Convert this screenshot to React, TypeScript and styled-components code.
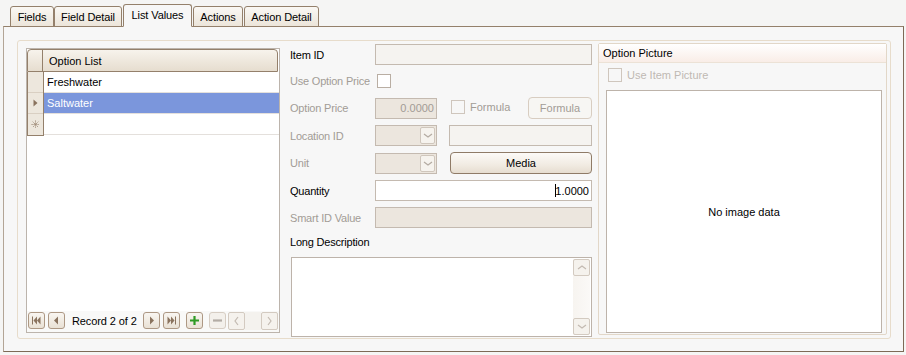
import React from "react";
import styled, { createGlobalStyle } from "styled-components";

const GlobalStyle = createGlobalStyle`
  html, body {
    margin: 0;
    padding: 0;
    background: #f5f5f4;
  }
  body {
    font-family: "Liberation Sans", Arial, sans-serif;
    font-size: 11px;
    color: #000;
  }
  * {
    box-sizing: border-box;
  }
`;

const BROWN = "#94806b";
const DIS_TEXT = "#a29c96";

interface TabDef {
  label: string;
  width: number;
  gap: number;
  active?: boolean;
}

const tabs: TabDef[] = [
  { label: "Fields", width: 44, gap: 0 },
  { label: "Field Detail", width: 68, gap: 0 },
  { label: "List Values", width: 69, gap: 0, active: true },
  { label: "Actions", width: 50, gap: 0 },
  { label: "Action Detail", width: 75, gap: 1 },
];

const ArrowIcon = ({ kind }: { kind: "first" | "prev" | "next" | "last" }) => {
  const c = "#8a735e";
  return (
    <svg width="11" height="9" viewBox="0 0 11 9">
      {kind === "first" && (
        <>
          <rect x="1" y="0.5" width="1" height="8" fill={c} />
          <path d="M6 0.5 L2.5 4.5 L6 8.5 Z" fill={c} />
          <path d="M9.5 0.5 L6 4.5 L9.5 8.5 Z" fill={c} />
        </>
      )}
      {kind === "prev" && <path d="M7 0.5 L3 4.5 L7 8.5 Z" fill={c} />}
      {kind === "next" && <path d="M4 0.5 L8 4.5 L4 8.5 Z" fill={c} />}
      {kind === "last" && (
        <>
          <path d="M1.5 0.5 L5 4.5 L1.5 8.5 Z" fill={c} />
          <path d="M5 0.5 L8.5 4.5 L5 8.5 Z" fill={c} />
          <rect x="9" y="0.5" width="1" height="8" fill={c} />
        </>
      )}
    </svg>
  );
};

const Chevron = ({ dir, color = "#c3bab1" }: { dir: "left" | "right" | "up" | "down"; color?: string }) => {
  const d = {
    left: "M6 1 L3 5 L6 9",
    right: "M3 1 L6 5 L3 9",
    up: "M1 6 L5 3 L9 6",
    down: "M1 3 L5 6 L9 3",
  }[dir];
  const horiz = dir === "left" || dir === "right";
  return (
    <svg width={horiz ? 9 : 10} height={horiz ? 10 : 9} viewBox={horiz ? "0 0 9 10" : "0 0 10 9"}>
      <path d={d} fill="none" stroke={color} strokeWidth="1.2" />
    </svg>
  );
};

const App = () => {
  return (
    <>
      <GlobalStyle />
      <Page>
        <TabStrip>
          {tabs.map((t) => (
            <Tab key={t.label} $width={t.width} $gap={t.gap} $active={!!t.active}>
              {t.label}
            </Tab>
          ))}
        </TabStrip>
        <TabPanel>
          <Frame>
            <OptionGrid>
              <GridHeader>
                <HeaderIndicator />
                <HeaderCell>Option List</HeaderCell>
              </GridHeader>
              <RowsBlock>
                <IndicatorColumn>
                  <IndicatorCell />
                  <IndicatorCell>
                    <svg width="5" height="8" viewBox="0 0 5 8">
                      <path d="M0.5 0.5 L4.5 4 L0.5 7.5 Z" fill="#8a735e" />
                    </svg>
                  </IndicatorCell>
                  <IndicatorCell $last>
                    <svg width="9" height="9" viewBox="0 0 9 9">
                      <path
                        d="M4.5 0.5 V8.5 M0.5 4.5 H8.5 M1.7 1.7 L7.3 7.3 M7.3 1.7 L1.7 7.3"
                        stroke="#9a8570"
                        strokeWidth="0.9"
                        strokeDasharray="1.2 0.8"
                      />
                    </svg>
                  </IndicatorCell>
                </IndicatorColumn>
                <DataColumn>
                  <DataCell>Freshwater</DataCell>
                  <DataCell $selected>Saltwater</DataCell>
                  <DataCell />
                </DataColumn>
              </RowsBlock>
              <GridFill />
              <Navigator>
                <NavButton>
                  <ArrowIcon kind="first" />
                </NavButton>
                <NavButton>
                  <ArrowIcon kind="prev" />
                </NavButton>
                <RecordText>Record 2 of 2</RecordText>
                <NavButton>
                  <ArrowIcon kind="next" />
                </NavButton>
                <NavButton>
                  <ArrowIcon kind="last" />
                </NavButton>
                <NavButton $ml={3}>
                  <svg width="11" height="11" viewBox="0 0 11 11">
                    <path d="M5.5 1 V10 M1 5.5 H10" stroke="#2f9a24" strokeWidth="2.2" />
                  </svg>
                </NavButton>
                <NavButton $disabled $ml={3}>
                  <svg width="11" height="11" viewBox="0 0 11 11">
                    <path d="M1 5.5 H10" stroke="#b3aca5" strokeWidth="2.2" />
                  </svg>
                </NavButton>
                <HScroll>
                  <ScrollBtn>
                    <Chevron dir="left" />
                  </ScrollBtn>
                  <ScrollTrack />
                  <ScrollBtn>
                    <Chevron dir="right" />
                  </ScrollBtn>
                </HScroll>
              </Navigator>
            </OptionGrid>

            <Form>
              <FieldRow $h={21}>
                <Label>Item ID</Label>
                <TextBox $w={217} $kind="readonly" />
              </FieldRow>
              <FieldRow $h={20}>
                <Label $disabled>Use Option Price</Label>
                <CheckBox $enabled $ml={2} />
              </FieldRow>
              <FieldRow $h={22}>
                <Label $disabled>Option Price</Label>
                <TextBox $w={62} $kind="disabled" $align="right">
                  0.0000
                </TextBox>
                <CheckLabel>
                  <CheckBox />
                  <span>Formula</span>
                </CheckLabel>
                <PushButton $disabled $w={64}>
                  Formula
                </PushButton>
              </FieldRow>
              <FieldRow $h={21}>
                <Label $disabled>Location ID</Label>
                <Combo>
                  <ComboBtn>
                    <Chevron dir="down" color="#b4aba2" />
                  </ComboBtn>
                </Combo>
                <TextBox $w={143} $kind="readonly" $ml={12} />
              </FieldRow>
              <FieldRow $h={22}>
                <Label $disabled>Unit</Label>
                <Combo>
                  <ComboBtn>
                    <Chevron dir="down" color="#b4aba2" />
                  </ComboBtn>
                </Combo>
                <PushButton $w={142} $ml={13}>
                  Media
                </PushButton>
              </FieldRow>
              <FieldRow $h={21}>
                <Label>Quantity</Label>
                <TextBox $w={217} $kind="normal" $align="right">
                  <Caret />1.0000
                </TextBox>
              </FieldRow>
              <FieldRow $h={21}>
                <Label $disabled>Smart ID Value</Label>
                <TextBox $w={217} $kind="disabled" />
              </FieldRow>
              <SectionLabel>Long Description</SectionLabel>
              <Memo>
                <VScroll>
                  <ScrollBtn $v>
                    <Chevron dir="up" />
                  </ScrollBtn>
                  <ScrollBtn $v>
                    <Chevron dir="down" />
                  </ScrollBtn>
                </VScroll>
              </Memo>
            </Form>

            <PicGroup>
              <PicHeader>Option Picture</PicHeader>
              <PicCheckRow>
                <CheckBox />
                <span>Use Item Picture</span>
              </PicCheckRow>
              <ImageBox>No image data</ImageBox>
            </PicGroup>
          </Frame>
        </TabPanel>
      </Page>
    </>
  );
};

export default App;

const Page = styled.div`
  width: 906px;
  height: 355px;
  padding-top: 4px;
`;

const TabStrip = styled.div`
  display: flex;
  align-items: flex-end;
  height: 23px;
  padding-left: 10px;
  margin-bottom: -1px;
  position: relative;
  z-index: 1;
`;

const Tab = styled.div<{ $width: number; $gap: number; $active: boolean }>`
  width: ${({ $width }) => $width}px;
  height: ${({ $active }) => ($active ? 23 : 21)}px;
  margin-left: ${({ $gap, $active }) => ($active ? 1 : $gap)}px;
  margin-right: ${({ $active }) => ($active ? 1 : 0)}px;
  border: 1px solid ${BROWN};
  border-bottom-color: ${({ $active }) => ($active ? "#f7f7f7" : BROWN)};
  border-radius: 3px 3px 0 0;
  background: ${({ $active }) =>
    $active ? "#f7f7f7" : "linear-gradient(#faf8f4, #ece5da)"};
  display: flex;
  align-items: center;
  justify-content: center;
  padding-bottom: ${({ $active }) => ($active ? 2 : 0)}px;
  letter-spacing: -0.1px;
  white-space: nowrap;
`;

const TabPanel = styled.div`
  margin-left: 3px;
  width: 901px;
  height: 326px;
  border: 1px solid ${BROWN};
  border-left-color: #b3a596;
  border-right-color: #7d6a56;
  border-bottom-color: #7d6a56;
  background: #f7f7f7;
  padding: 13px 12px 12px 13px;
`;

const Frame = styled.div`
  height: 100%;
  border: 1px solid #e7dccb;
  border-radius: 3px;
  display: flex;
  align-items: flex-start;
  padding: 0 3px 0 8px;
`;

const OptionGrid = styled.div`
  width: 254px;
  height: 285px;
  margin-top: 7px;
  border: 1px solid #bcb4ac;
  background: #fff;
  display: flex;
  flex-direction: column;
`;

const GridHeader = styled.div`
  display: flex;
  height: 23px;
  margin-right: 1px;
  border: 1px solid ${BROWN};
  border-radius: 4px 4px 0 0;
  background: linear-gradient(#f7f3ec, #e6ddcf);
  overflow: hidden;
`;

const HeaderIndicator = styled.div`
  width: 15px;
  border-right: 1px solid ${BROWN};
`;

const HeaderCell = styled.div`
  flex: 1;
  display: flex;
  align-items: center;
  padding-left: 6px;
`;

const RowsBlock = styled.div`
  display: flex;
`;

const IndicatorColumn = styled.div`
  width: 17px;
  border: 1px solid ${BROWN};
  border-top: none;
  background: #ede7dd;
`;

const IndicatorCell = styled.div<{ $last?: boolean }>`
  height: 21px;
  border-bottom: ${({ $last }) => ($last ? "none" : "1px solid #d9cfc2")};
  display: flex;
  align-items: center;
  justify-content: center;
`;

const DataColumn = styled.div`
  flex: 1;
`;

const DataCell = styled.div<{ $selected?: boolean }>`
  height: 21px;
  border-bottom: 1px solid #e4e0dc;
  display: flex;
  align-items: center;
  padding-left: 3px;
  background: ${({ $selected }) => ($selected ? "#7b96dc" : "#fff")};
  color: ${({ $selected }) => ($selected ? "#fff" : "#000")};
`;

const GridFill = styled.div`
  flex: 1;
`;

const Navigator = styled.div`
  height: 21px;
  display: flex;
  align-items: center;
  padding: 0 1px 2px 1px;
  gap: 3px;
  background: #f9f9f8;
`;

const NavButton = styled.div<{ $disabled?: boolean; $ml?: number }>`
  width: 17px;
  height: 17px;
  margin-left: ${({ $ml }) => $ml ?? 0}px;
  border: 1px solid ${({ $disabled }) => ($disabled ? "#d6cdc3" : "#ad9884")};
  border-radius: 3px;
  background: ${({ $disabled }) =>
    $disabled ? "#f3f0eb" : "linear-gradient(#f9f6f1, #e9e1d5)"};
  display: flex;
  align-items: center;
  justify-content: center;
`;

const RecordText = styled.span`
  margin: 0 3px 0 4px;
  letter-spacing: -0.1px;
  white-space: nowrap;
`;

const HScroll = styled.div`
  display: flex;
  flex: 1;
  height: 18px;
  margin-left: -1px;
`;

const ScrollBtn = styled.div<{ $v?: boolean }>`
  width: 17px;
  height: ${({ $v }) => ($v ? 17 : 18)}px;
  border: 1px solid #d3cac0;
  border-radius: 2px;
  background: #f5f2ed;
  display: flex;
  align-items: center;
  justify-content: center;
`;

const ScrollTrack = styled.div`
  flex: 1;
  background: #f4f2ee;
`;

const Form = styled.div`
  width: 302px;
  margin-left: 10px;
  margin-top: 3px;
  display: flex;
  flex-direction: column;
  gap: 6px;
`;

const FieldRow = styled.div<{ $h: number }>`
  height: ${({ $h }) => $h}px;
  display: flex;
  align-items: center;
`;

const Label = styled.span<{ $disabled?: boolean }>`
  width: 85px;
  flex-shrink: 0;
  color: ${({ $disabled }) => ($disabled ? DIS_TEXT : "#000")};
  letter-spacing: -0.2px;
  white-space: nowrap;
`;

const textBoxBg = {
  readonly: "#f5f3f0",
  disabled: "#ece6de",
  normal: "#fff",
};

const TextBox = styled.div<{
  $w: number;
  $kind: "readonly" | "disabled" | "normal";
  $align?: "right";
  $ml?: number;
}>`
  width: ${({ $w }) => $w}px;
  height: 21px;
  margin-left: ${({ $ml }) => $ml ?? 0}px;
  border: 1px solid #c4bab0;
  background: ${({ $kind }) => textBoxBg[$kind]};
  color: ${({ $kind }) => ($kind === "disabled" ? DIS_TEXT : "#000")};
  display: flex;
  align-items: center;
  justify-content: ${({ $align }) => ($align === "right" ? "flex-end" : "flex-start")};
  padding: 0 2px;
`;

const Caret = styled.span`
  width: 1px;
  height: 13px;
  background: #000;
  margin-right: -1px;
`;

const CheckBox = styled.div<{ $enabled?: boolean; $ml?: number }>`
  width: 14px;
  height: 14px;
  margin-left: ${({ $ml }) => $ml ?? 0}px;
  border: 1px solid ${({ $enabled }) => ($enabled ? "#b9aea3" : "#cfc6bd")};
  background: ${({ $enabled }) => ($enabled ? "#fff" : "#f7f7f7")};
  flex-shrink: 0;
`;

const CheckLabel = styled.div`
  display: flex;
  align-items: center;
  gap: 5px;
  margin-left: 14px;
  width: 77px;
  color: ${DIS_TEXT};
  padding-bottom: 3px;
`;

const PushButton = styled.div<{ $disabled?: boolean; $w: number; $ml?: number }>`
  width: ${({ $w }) => $w}px;
  height: 22px;
  margin-left: ${({ $ml }) => $ml ?? 0}px;
  border: 1px solid ${({ $disabled }) => ($disabled ? "#d8cdc1" : "#8f7b67")};
  border-radius: 4px;
  background: ${({ $disabled }) =>
    $disabled ? "#f7f6f3" : "linear-gradient(#fcfaf7, #f1ebe2 60%, #e6ddd0)"};
  color: ${({ $disabled }) => ($disabled ? DIS_TEXT : "#000")};
  display: flex;
  align-items: center;
  justify-content: center;
`;

const Combo = styled.div`
  width: 62px;
  height: 21px;
  border: 1px solid #c4bab0;
  background: #ece6de;
  display: flex;
  justify-content: flex-end;
  align-items: center;
  padding-right: 1px;
`;

const ComboBtn = styled.div`
  width: 15px;
  height: 17px;
  border: 1px solid #cfc6bc;
  border-radius: 2px;
  background: #f6f3ee;
  display: flex;
  align-items: center;
  justify-content: center;
`;

const SectionLabel = styled.div`
  height: 14px;
  margin-top: 1px;
  display: flex;
  align-items: center;
  letter-spacing: -0.2px;
`;

const Memo = styled.div`
  width: 301px;
  height: 80px;
  margin-top: 2px;
  margin-left: 1px;
  border: 1px solid #bdb3aa;
  background: #fff;
  display: flex;
  justify-content: flex-end;
  padding: 1px;
`;

const VScroll = styled.div`
  width: 17px;
  display: flex;
  flex-direction: column;
  justify-content: space-between;
  background: linear-gradient(90deg, #f7f4f0, #fbf9f7);
`;

const PicGroup = styled.div`
  width: 289px;
  height: 292px;
  margin-top: 2px;
  margin-left: 6px;
  border: 1px solid #e2d7c8;
  border-radius: 2px;
  display: flex;
  flex-direction: column;
`;

const PicHeader = styled.div`
  height: 19px;
  display: flex;
  align-items: center;
  padding-left: 4px;
  background: linear-gradient(#ffffff, #f9ede7);
  border-bottom: 1px solid #ece2d6;
`;

const PicCheckRow = styled.div`
  display: flex;
  align-items: center;
  gap: 5px;
  height: 14px;
  margin: 5px 0 0 9px;
  color: #bfb9b3;
`;

const ImageBox = styled.div`
  flex: 1;
  margin: 8px 4px 1px 7px;
  border: 1px solid #bdb3aa;
  background: #fff;
  display: flex;
  align-items: center;
  justify-content: center;
`;
